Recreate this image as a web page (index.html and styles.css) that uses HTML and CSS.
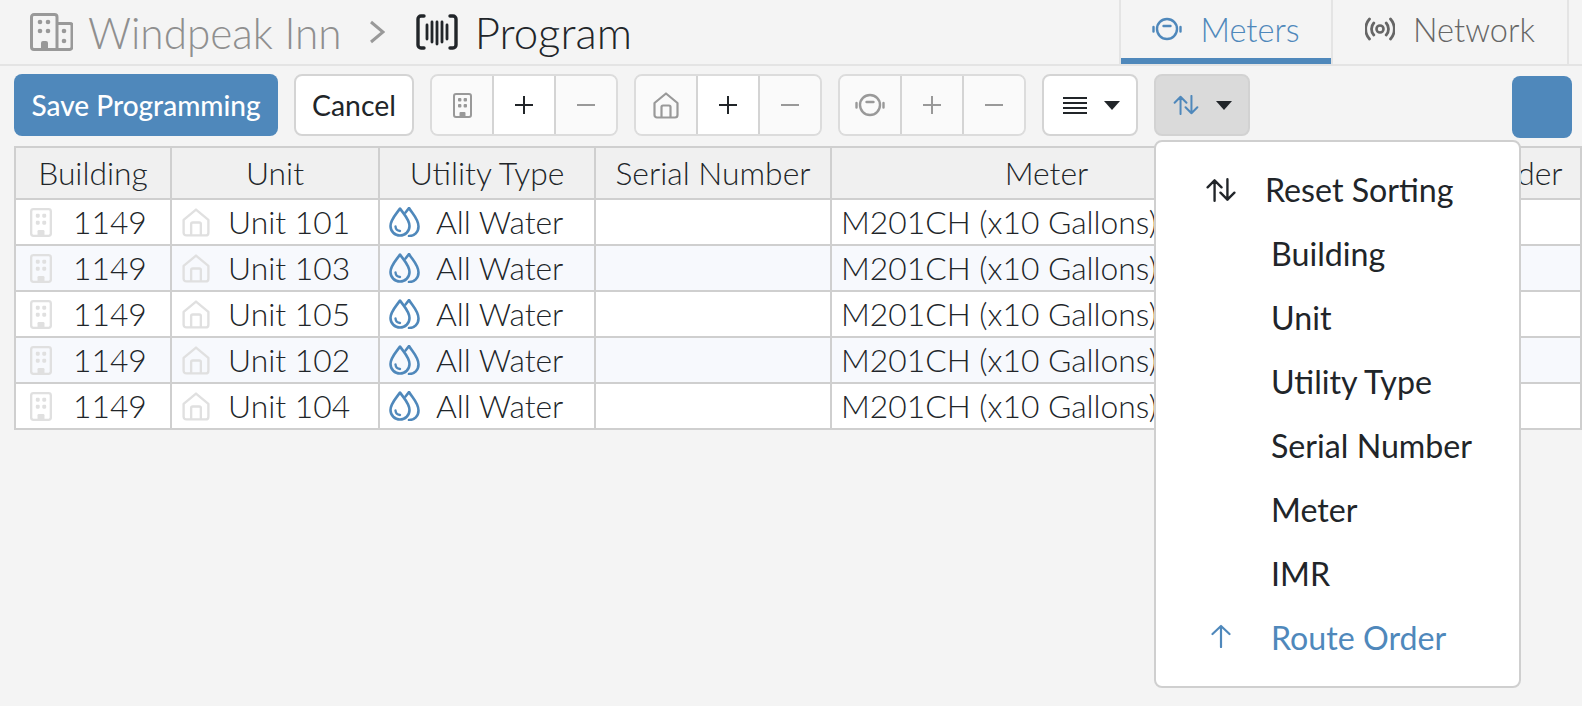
FILE: index.html
```html
<!DOCTYPE html>
<html lang="en">
<head>
    <meta charset="UTF-8">
    <title>Windpeak Inn - Program</title>
    <link rel="stylesheet" href="styles.css">
</head>
<body>
    <svg class="sprite" xmlns="http://www.w3.org/2000/svg">
        <symbol id="i-hotel" viewBox="0 0 43 38">
            <path d="M27 36.500H4a2.500 2.500 0 0 1-2.500-2.500V4A2.500 2.500 0 0 1 4 1.500h20.500A2.500 2.500 0 0 1 27 4v32.500zM27 10.500h13a2 2 0 0 1 2 2V34a2.500 2.500 0 0 1-2.500 2.500H27" fill="none" stroke="currentColor" stroke-width="3"/>
            <path d="M11 37v-7a2 2 0 0 1 2-2h3a2 2 0 0 1 2 2v7z" fill="currentColor"/>
            <g fill="currentColor"><circle cx="10" cy="9" r="2.300"/><circle cx="18" cy="9" r="2.300"/><circle cx="10" cy="18" r="2.300"/><circle cx="18" cy="18" r="2.300"/><circle cx="34" cy="18" r="2.300"/><circle cx="34" cy="28" r="2.300"/></g>
        </symbol>
        <symbol id="i-building" viewBox="0 0 19 25">
            <rect x="1" y="1" width="17" height="23" rx="2" fill="none" stroke="currentColor" stroke-width="2"/>
            <path d="M6.500 24v-4a1 1 0 0 1 1-1h4a1 1 0 0 1 1 1v4z" fill="currentColor"/>
            <g fill="currentColor"><rect x="5" y="5" width="3.400" height="3.400" rx="1"/><rect x="10.600" y="5" width="3.400" height="3.400" rx="1"/><rect x="5" y="11" width="3.400" height="3.400" rx="1"/><rect x="10.600" y="11" width="3.400" height="3.400" rx="1"/></g>
        </symbol>
        <symbol id="i-home" viewBox="0 0 26 27">
            <path d="M1.500 11 13 1.500 24.500 11v12a2.500 2.500 0 0 1-2.500 2.500H4A2.500 2.500 0 0 1 1.500 23z" fill="none" stroke="currentColor" stroke-width="2.200" stroke-linejoin="round"/>
            <path d="M8.500 25.500V15a1.500 1.500 0 0 1 1.500-1.500h6a1.500 1.500 0 0 1 1.500 1.500v10.500" fill="none" stroke="currentColor" stroke-width="2.200"/>
        </symbol>
        <symbol id="i-meter" viewBox="0 0 30 24">
            <circle cx="15" cy="12" r="10" fill="none" stroke="currentColor" stroke-width="2.400"/>
            <path d="M11.500 9h7" stroke="currentColor" stroke-width="2.400" stroke-linecap="round"/>
            <path d="M1.500 10v4.500M28.500 10v4.500" stroke="currentColor" stroke-width="2.400" stroke-linecap="round"/>
        </symbol>
        <symbol id="i-network" viewBox="0 0 30 23">
            <circle cx="15" cy="11.500" r="3.500" fill="none" stroke="currentColor" stroke-width="2.600"/>
            <path d="M8.800 5.500a9 9 0 0 0 0 12M21.200 5.500a9 9 0 0 1 0 12M4.500 1.500a15 15 0 0 0 0 20M25.500 1.500a15 15 0 0 1 0 20" fill="none" stroke="currentColor" stroke-width="2.800" stroke-linecap="round"/>
        </symbol>
        <symbol id="i-program" viewBox="0 0 42 36">
            <path d="M8 2H5a3 3 0 0 0-3 3v26a3 3 0 0 0 3 3h3M34 2h3a3 3 0 0 1 3 3v26a3 3 0 0 1-3 3h-3" fill="none" stroke="currentColor" stroke-width="3.400" stroke-linecap="round"/>
            <path d="M11 11v14M16 8v20M21 8v22M26 8v20M31 11v14" stroke="currentColor" stroke-width="2.800" stroke-linecap="round"/>
        </symbol>
        <symbol id="i-sort" viewBox="0 0 28 22">
            <path d="M8 21V2M1.500 8.500 8 2l6.500 6.500M20 1v19M13.500 13.500 20 20l6.500-6.500" fill="none" stroke="currentColor" stroke-width="2.200" stroke-linecap="round" stroke-linejoin="round"/>
        </symbol>
        <symbol id="i-up" viewBox="0 0 20 24">
            <path d="M10 23V2M1.500 10 10 2l8.500 8" fill="none" stroke="currentColor" stroke-width="2.200" stroke-linecap="round" stroke-linejoin="round"/>
        </symbol>
        <symbol id="i-plus" viewBox="0 0 18 18">
            <path d="M9 0v18M0 9h18" stroke="currentColor" stroke-width="2"/>
        </symbol>
        <symbol id="i-minus" viewBox="0 0 18 18">
            <path d="M0 9h18" stroke="currentColor" stroke-width="2"/>
        </symbol>
        <symbol id="i-lines" viewBox="0 0 24 18">
            <path d="M0 2h24M0 7h24M0 12h24M0 17h24" stroke="currentColor" stroke-width="2"/>
        </symbol>
        <symbol id="i-caret" viewBox="0 0 16 9">
            <path d="M0 0h16L8 9z" fill="currentColor"/>
        </symbol>
        <symbol id="i-water" viewBox="0 0 31 30">
            <path d="M11 1.500C6.500 8 1.500 12.500 1.500 19a9.500 9.500 0 0 0 19 0C20.500 12.500 15.500 8 11 1.500z" fill="none" stroke="currentColor" stroke-width="2.600" stroke-linejoin="round"/>
            <path d="M6.500 19.500a5 5 0 0 0 4.500 4.500" fill="none" stroke="currentColor" stroke-width="2.400" stroke-linecap="round"/>
            <path d="M16.500 5.500c1-1.200 2-2.500 3.500-4.500 3.500 6 9.500 11 9.500 18.500 0 5.500-4 9.500-9.500 9.500" fill="none" stroke="currentColor" stroke-width="2.600" stroke-linecap="round" stroke-linejoin="round"/>
        </symbol>
    </svg>

    <div class="topbar">
        <div class="crumbs">
            <svg class="ico-hotel"><use href="#i-hotel"/></svg>
            <span class="crumb-site">Windpeak Inn</span>
            <svg class="ico-chevron" viewBox="0 0 16 24"><path d="M2 2l12 10L2 22" fill="none" stroke="currentColor" stroke-width="3"/></svg>
            <svg class="ico-program"><use href="#i-program"/></svg>
            <span class="crumb-page">Program</span>
        </div>
        <div class="tabs">
            <div class="tab tab-active"><svg class="ico-tab"><use href="#i-meter"/></svg>Meters</div>
            <div class="tab"><svg class="ico-tab"><use href="#i-network"/></svg>Network</div>
        </div>
    </div>

    <div class="toolbar">
        <button class="btn btn-save">Save Programming</button>
        <button class="btn btn-cancel">Cancel</button>

        <div class="btn-group">
            <span class="seg seg-off"><svg class="ico-seg-b"><use href="#i-building"/></svg></span>
            <span class="seg seg-on"><svg class="ico-pm"><use href="#i-plus"/></svg></span>
            <span class="seg seg-off"><svg class="ico-pm"><use href="#i-minus"/></svg></span>
        </div>
        <div class="btn-group">
            <span class="seg seg-off"><svg class="ico-seg-h"><use href="#i-home"/></svg></span>
            <span class="seg seg-on"><svg class="ico-pm"><use href="#i-plus"/></svg></span>
            <span class="seg seg-off"><svg class="ico-pm"><use href="#i-minus"/></svg></span>
        </div>
        <div class="btn-group">
            <span class="seg seg-off"><svg class="ico-seg-m"><use href="#i-meter"/></svg></span>
            <span class="seg seg-off"><svg class="ico-pm"><use href="#i-plus"/></svg></span>
            <span class="seg seg-off"><svg class="ico-pm"><use href="#i-minus"/></svg></span>
        </div>

        <div class="drop drop-lines">
            <svg class="ico-lines"><use href="#i-lines"/></svg>
            <svg class="ico-caret"><use href="#i-caret"/></svg>
        </div>
        <div class="drop drop-sort">
            <svg class="ico-sort"><use href="#i-sort"/></svg>
            <svg class="ico-caret"><use href="#i-caret"/></svg>
        </div>

        <div class="square-btn"></div>
    </div>

    <table class="grid">
        <colgroup>
            <col class="col-building">
            <col class="col-unit">
            <col class="col-type">
            <col class="col-serial">
            <col class="col-meter">
            <col class="col-imr">
            <col class="col-route">
        </colgroup>
        <thead>
            <tr>
                <th>Building</th>
                <th>Unit</th>
                <th>Utility Type</th>
                <th>Serial Number</th>
                <th>Meter</th>
                <th>IMR</th>
                <th>Route Order</th>
            </tr>
        </thead>
        <tbody>
            <tr>
                <td><div class="cell cell-b"><svg class="ico-b"><use href="#i-building"/></svg>1149</div></td>
                <td><div class="cell cell-u"><svg class="ico-h"><use href="#i-home"/></svg>Unit 101</div></td>
                <td><div class="cell cell-t"><svg class="ico-w"><use href="#i-water"/></svg>All Water</div></td>
                <td></td>
                <td><div class="cell cell-m">M201CH (x10 Gallons)</div></td>
                <td></td>
                <td></td>
            </tr>
            <tr>
                <td><div class="cell cell-b"><svg class="ico-b"><use href="#i-building"/></svg>1149</div></td>
                <td><div class="cell cell-u"><svg class="ico-h"><use href="#i-home"/></svg>Unit 103</div></td>
                <td><div class="cell cell-t"><svg class="ico-w"><use href="#i-water"/></svg>All Water</div></td>
                <td></td>
                <td><div class="cell cell-m">M201CH (x10 Gallons)</div></td>
                <td></td>
                <td></td>
            </tr>
            <tr>
                <td><div class="cell cell-b"><svg class="ico-b"><use href="#i-building"/></svg>1149</div></td>
                <td><div class="cell cell-u"><svg class="ico-h"><use href="#i-home"/></svg>Unit 105</div></td>
                <td><div class="cell cell-t"><svg class="ico-w"><use href="#i-water"/></svg>All Water</div></td>
                <td></td>
                <td><div class="cell cell-m">M201CH (x10 Gallons)</div></td>
                <td></td>
                <td></td>
            </tr>
            <tr>
                <td><div class="cell cell-b"><svg class="ico-b"><use href="#i-building"/></svg>1149</div></td>
                <td><div class="cell cell-u"><svg class="ico-h"><use href="#i-home"/></svg>Unit 102</div></td>
                <td><div class="cell cell-t"><svg class="ico-w"><use href="#i-water"/></svg>All Water</div></td>
                <td></td>
                <td><div class="cell cell-m">M201CH (x10 Gallons)</div></td>
                <td></td>
                <td></td>
            </tr>
            <tr>
                <td><div class="cell cell-b"><svg class="ico-b"><use href="#i-building"/></svg>1149</div></td>
                <td><div class="cell cell-u"><svg class="ico-h"><use href="#i-home"/></svg>Unit 104</div></td>
                <td><div class="cell cell-t"><svg class="ico-w"><use href="#i-water"/></svg>All Water</div></td>
                <td></td>
                <td><div class="cell cell-m">M201CH (x10 Gallons)</div></td>
                <td></td>
                <td></td>
            </tr>
        </tbody>
    </table>

    <!-- open sort menu, sits over the table -->
    <div class="menu">
        <div class="menu-item menu-reset"><svg class="ico-menu-sort"><use href="#i-sort"/></svg>Reset Sorting</div>
        <div class="menu-item">Building</div>
        <div class="menu-item">Unit</div>
        <div class="menu-item">Utility Type</div>
        <div class="menu-item">Serial Number</div>
        <div class="menu-item">Meter</div>
        <div class="menu-item">IMR</div>
        <div class="menu-item menu-active"><svg class="ico-menu-up"><use href="#i-up"/></svg>Route Order</div>
    </div>
</body>
</html>
```

FILE: styles.css
```css
html, body {
    height: 100%;
}

body {
    margin: 0;
    background-color: #f4f4f4;
    font-family: 'Lato', 'Liberation Sans', sans-serif;
    color: #212529;
    overflow: hidden;
    position: relative;
}

.sprite {
    display: none;
}

/* top bar */
.topbar {
    display: flex;
    justify-content: space-between;
    height: 64px;
    border-bottom: 2px solid #e4e4e4;
}

.crumbs {
    display: flex;
    align-items: center;
    padding-left: 30px;
    font-weight: 300;
    height: 64px;
}

.ico-hotel {
    width: 43px;
    height: 38px;
    color: #999;
    margin-right: 15px;
}

.crumb-site {
    color: #8f8f8f;
    font-size: 42.3px;
}

.crumb-page {
    font-size: 43.8px;
}

.ico-chevron {
    width: 16px;
    height: 24px;
    color: #999;
    margin: 0 31px 0 27px;
}

.ico-program {
    width: 42px;
    height: 36px;
    color: #212529;
    margin-right: 17px;
}

.tabs {
    display: flex;
    height: 64px;
    margin-right: 13px;
}

.tab {
    display: flex;
    align-items: center;
    justify-content: center;
    gap: 18px;
    height: 64px;
    box-sizing: border-box;
    padding-bottom: 6px;
    font-weight: 300;
    font-size: 32.5px;
    color: #666;
    border-right: 2px solid #e4e4e4;
    width: 236px;
}

.tab-active {
    width: 214px;
    color: #4f88bb;
    border-left: 2px solid #e4e4e4;
    box-shadow: inset 0 -6px 0 #4f88bb;
}

.ico-tab {
    width: 30px;
    height: 24px;
}

/* toolbar */
.toolbar {
    display: flex;
    align-items: flex-start;
    padding: 8px 10px 0 14px;
    height: 72px;
    box-sizing: border-box;
}

.btn {
    height: 62px;
    border-radius: 8px;
    font-family: 'Lato', 'Liberation Sans', sans-serif;
    font-size: 28px;
    padding: 0;
    box-sizing: border-box;
}

.btn-save {
    width: 264px;
    background-color: #4f88bb;
    border: none;
    color: #fff;
    font-weight: 500;
}

.btn-cancel {
    width: 120px;
    margin: 0 0 0 16px;
    background-color: #fff;
    border: 2px solid #d4d4d4;
    color: #212529;
    font-size: 28.4px;
    font-weight: 400;
}

.btn-group {
    display: flex;
    height: 62px;
    box-sizing: border-box;
    margin-left: 16px;
    border: 2px solid #dcdcdc;
    border-radius: 8px;
    overflow: hidden;
}

.seg {
    display: flex;
    align-items: center;
    justify-content: center;
    width: 60px;
    border-left: 2px solid #d4d4d4;
}

.seg:first-child {
    border-left: none;
}

.seg-off {
    background-color: #fafafa;
    color: #999;
}

.seg-on {
    background-color: #fff;
    color: #212529;
}

.ico-seg-b {
    width: 19px;
    height: 25px;
}

.ico-seg-h {
    width: 26px;
    height: 27px;
}

.ico-seg-m {
    width: 30px;
    height: 24px;
}

.ico-pm {
    width: 18px;
    height: 18px;
}

.drop {
    display: flex;
    align-items: center;
    justify-content: center;
    height: 62px;
    box-sizing: border-box;
    border-radius: 8px;
    border: 2px solid #d4d4d4;
    gap: 17px;
}

.drop-lines {
    width: 96px;
    margin-left: 16px;
    padding-left: 3px;
    background-color: #fff;
}

.drop-sort {
    width: 96px;
    margin-left: 16px;
    background-color: #dadada;
    border-color: #d2d2d2;
}

.ico-lines {
    width: 24px;
    height: 18px;
    color: #212529;
}

.ico-caret {
    width: 16px;
    height: 9px;
    color: #212529;
}

.ico-sort {
    width: 26px;
    height: 20px;
    color: #4f88bb;
}

.square-btn {
    width: 60px;
    height: 62px;
    margin: 2px 0 0 auto;
    background-color: #4f88bb;
    border-radius: 8px;
}

/* table */
.grid {
    margin: 8px 0 0 14px;
    border-collapse: collapse;
    table-layout: fixed;
    width: 1566px;
    font-weight: 300;
    font-size: 31.8px;
    border: 2px solid #cfcfcf;
}

.col-building { width: 156px; }
.col-unit { width: 208px; }
.col-type { width: 216px; }
.col-serial { width: 236px; }
.col-meter { width: 431px; }
.col-imr { width: 112px; }
.col-route { width: 207px; }

.grid th {
    height: 50px;
    padding: 0;
    font-weight: 300;
    background-color: #f0f0f0;
    border: 2px solid #cfcfcf;
    white-space: nowrap;
}

.grid td {
    height: 44px;
    padding: 0;
    background-color: #fff;
    border: 2px solid #cfcfcf;
    white-space: nowrap;
}

.grid tbody tr:nth-child(even) td {
    background-color: #f7f9fd;
}

.cell {
    display: flex;
    align-items: center;
    height: 44px;
}

.cell-b {
    padding-left: 14px;
    gap: 21px;
}

.cell-u {
    padding-left: 10px;
    gap: 18px;
}

.cell-t {
    padding-left: 9px;
    gap: 16px;
}

.cell-m {
    padding-left: 9px;
}

.ico-b {
    width: 22px;
    height: 29px;
    color: #e0e0e0;
}

.ico-h {
    width: 28px;
    height: 31px;
    color: #e0e0e0;
}

.ico-w {
    width: 31px;
    height: 30px;
    color: #4f88bb;
}

/* sort menu */
.menu {
    position: absolute;
    left: 1154px;
    top: 140px;
    width: 367px;
    height: 548px;
    box-sizing: border-box;
    padding-top: 16px;
    background-color: #fff;
    border: 2px solid #cfcfcf;
    border-radius: 8px;
    font-size: 32.2px;
    font-weight: 400;
}

.menu-item {
    position: relative;
    height: 64px;
    line-height: 64px;
    padding-left: 115px;
    white-space: nowrap;
}

.menu-reset {
    padding-left: 109px;
}

.menu-active {
    color: #4f88bb;
}

.ico-menu-sort {
    position: absolute;
    left: 50px;
    top: 20px;
    width: 30px;
    height: 24px;
    color: #212529;
}

.ico-menu-up {
    position: absolute;
    left: 55px;
    top: 18px;
    width: 20px;
    height: 24px;
}
```
